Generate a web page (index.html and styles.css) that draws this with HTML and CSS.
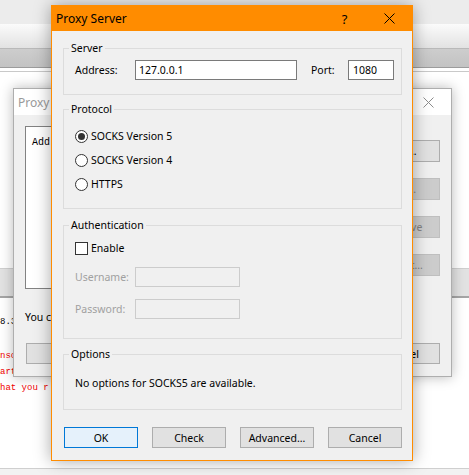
FILE: index.html
```html
<!DOCTYPE html>
<html>
<head>
<meta charset="utf-8">
<link rel="stylesheet" href="styles.css">
</head>
<body>
<div class="app">
  <div class="app-top"></div>
  <div class="app-fade"></div>
  <div class="app-band"></div>
  <div class="app-lines"></div>
  <div class="app-view"></div>
  <div class="app-bar2"></div>
  <div class="console">
    <div class="con-line con-dark">8.3</div>
    <div class="con-line con-red con-gap">nso</div>
    <div class="con-line con-red">art</div>
    <div class="con-line con-red">hat you r</div>
  </div>
  <div class="app-status"></div>
</div>

<div class="dlg2">
  <div class="dlg2-title">
    <span class="dlg2-caption">Proxy</span>
    <span class="dlg2-close"><svg width="11" height="11" viewBox="0 0 11 11"><path d="M0.5 0.5L10.5 10.5M10.5 0.5L0.5 10.5" stroke="#8c8c8c" stroke-width="1" fill="none"/></svg></span>
  </div>
  <div class="dlg2-body">
    <div class="dlg2-row">
      <div class="listbox"><span class="mono">Add</span></div>
      <div class="side-btns">
        <span class="btn2">Add...</span>
        <span class="btn2 disabled">Edit...</span>
        <span class="btn2 disabled">Remove</span>
        <span class="btn2 disabled">Export...</span>
      </div>
    </div>
    <div class="dlg2-text">You can</div>
    <div class="dlg2-btnrow">
      <span class="btn2">OK</span>
      <span class="btn2">Cancel</span>
    </div>
  </div>
</div>

<div class="dlg">
  <div class="titlebar">
    <span class="title">Proxy Server</span>
    <span class="cap-btn help">?</span>
    <span class="cap-btn"><svg width="11" height="11" viewBox="0 0 11 11"><path d="M0.5 0.5L10.5 10.5M10.5 0.5L0.5 10.5" stroke="#000" stroke-width="1" fill="none"/></svg></span>
  </div>
  <div class="dlg-body">
    <fieldset class="grp">
      <legend>Server</legend>
      <div class="gbody gb-server">
        <div class="row">
          <span class="lbl lbl-addr">Address:</span>
          <span class="input w-addr">127.0.0.1</span>
          <span class="lbl lbl-port">Port:</span>
          <span class="input w-port">1080</span>
        </div>
      </div>
    </fieldset>

    <fieldset class="grp grp-protocol">
      <legend>Protocol</legend>
      <div class="gbody gb-protocol">
        <div class="radio-row"><span class="radio checked"></span><span>SOCKS Version 5</span></div>
        <div class="radio-row"><span class="radio"></span><span>SOCKS Version 4</span></div>
        <div class="radio-row"><span class="radio"></span><span>HTTPS</span></div>
      </div>
    </fieldset>

    <fieldset class="grp grp-auth">
      <legend>Authentication</legend>
      <div class="gbody gb-auth">
        <div class="check-row"><span class="checkbox"></span><span>Enable</span></div>
        <div class="row row-user"><span class="lbl lbl-addr off">Username:</span><span class="input w-auth dis"></span></div>
        <div class="row row-pass"><span class="lbl lbl-addr off">Password:</span><span class="input w-auth dis"></span></div>
      </div>
    </fieldset>

    <fieldset class="grp grp-options">
      <legend>Options</legend>
      <div class="gbody gb-options">No options for SOCKS5 are available.</div>
    </fieldset>

    <div class="btnrow">
      <span class="btn default">OK</span>
      <span class="btn">Check</span>
      <span class="btn">Advanced...</span>
      <span class="btn">Cancel</span>
    </div>
  </div>
</div>
</body>
</html>
```

FILE: styles.css
```css
* { box-sizing: border-box; }
html, body { margin: 0; padding: 0; }
body {
  width: 469px;
  height: 475px;
  overflow: hidden;
  position: relative;
  background: #fff;
  font-family: "Noto Sans", "Liberation Sans", sans-serif;
  font-size: 10.5px;
  color: #000;
}

/* background application */
.app { display: flex; flex-direction: column; height: 475px; }
.app-top { height: 24px; background: #ececec; }
.app-fade { height: 24px; background: linear-gradient(#fbfbfb, #e2e2e2); }
.app-band { height: 19px; background: linear-gradient(#cdcdcd, #c3c3c3); border-top: 1px solid #b9b9b9; }
.app-lines { height: 5px; background: #fff; border-top: 1px solid #9c9c9c; border-bottom: 1px solid #c9c9c9; }
.app-view { height: 196px; background: #fff; }
.app-bar2 { height: 30px; background: #e2e2e2; border-top: 1px solid #cfcfcf; border-bottom: 2px solid #a5a5a5; }
.console { flex: 1; padding-top: 16px; font-family: "Liberation Mono", monospace; font-size: 9px; }
.con-line { height: 16px; line-height: 16px; white-space: nowrap; }
.con-dark { color: #000; }
.con-red { color: #f00000; }
.con-gap { margin-top: 18px; }
.app-status { height: 7px; background: #f2f2f2; border-top: 1px solid #cfcfcf; }

/* second dialog behind */
.dlg2 {
  position: absolute;
  left: 13px; top: 88px;
  width: 439px; height: 289px;
  border: 1px solid #aeaeae;
  background: #f0f0f0;
  box-shadow: 0 0 12px rgba(0,0,0,0.28);
  display: flex; flex-direction: column;
}
.dlg2-title { height: 26px; background: #fff; display: flex; align-items: center; padding-left: 4px; font-size: 12px; }
.dlg2-caption { flex: 1; color: #9a9a9a; }
.dlg2-close { width: 46px; display: flex; justify-content: center; }
.dlg2-body { padding: 11px 11px 0 11px; display: flex; flex-direction: column; }
.dlg2-row { display: flex; }
.listbox { width: 320px; height: 163px; background: #fff; border: 1px solid #828282; padding: 6px 0 0 6px; line-height: 16px; }
.mono { font-family: "Liberation Mono", monospace; font-size: 10px; }
.side-btns { margin-left: auto; margin-top: 14px; display: flex; flex-direction: column; gap: 16px; }
.btn2 {
  width: 75px; height: 22px;
  display: flex; align-items: center; justify-content: center;
  background: #e1e1e1; border: 1px solid #adadad;
}
.btn2.disabled { background: #cccccc; border-color: #bfbfbf; color: #838383; }
.dlg2-text { margin-top: 20px; line-height: 16px; height: 16px; white-space: nowrap; }
.dlg2-btnrow { margin-top: 18px; display: flex; justify-content: space-between; padding-left: 1px; }
.dlg2-btnrow .btn2 { height: 21px; }

/* main dialog */
.dlg {
  position: absolute;
  left: 51px; top: 5px;
  width: 362px;
  border: 1px solid #ff8c00;
  background: #f0f0f0;
  box-shadow: 0 0 16px rgba(0,0,0,0.35);
}
.titlebar { height: 25px; background: #ff8c00; display: flex; align-items: center; font-size: 12px; }
.title { flex: 1; padding-left: 4px; }
.cap-btn { width: 45px; height: 25px; display: flex; align-items: center; justify-content: center; }
.help { font-size: 13px; }

.dlg-body { padding: 9px 10px 12px 11px; display: flex; flex-direction: column; }
.grp { margin: 0; padding: 0; min-width: 0; border: 1px solid #dcdcdc; }
.grp legend { margin-left: 5px; padding: 0 2px; line-height: 16px; height: 16px; }
.grp-protocol { margin-top: 6px; }
.grp-auth { margin-top: 8px; }
.grp-options { margin-top: 7px; }
.gbody { padding-left: 11px; }
.gb-server { padding-top: 4px; padding-bottom: 14px; }
.gb-protocol { padding-top: 7px; padding-bottom: 12px; }
.gb-auth { padding-top: 5px; padding-bottom: 19px; }
.gb-options { padding-top: 13px; padding-bottom: 18px; line-height: 16px; height: 47px; }

.row { display: flex; align-items: center; height: 20px; }
.lbl { white-space: nowrap; }
.lbl-addr { width: 60px; }
.lbl-port { margin-left: 14px; width: 37px; }
.off { color: #a0a0a0; }
.input { height: 20px; background: #fff; border: 1px solid #7a7a7a; line-height: 18px; padding-left: 3px; white-space: nowrap; }
.w-addr { width: 162px; }
.w-port { width: 46px; padding-left: 4px; }
.w-auth { width: 105px; }
.input.dis { background: #f0f0f0; border-color: #cccccc; }
.row-user { margin-top: 9px; }
.row-pass { margin-top: 12px; }

.radio-row { display: flex; align-items: center; height: 24px; gap: 3px; }
.radio { width: 13px; height: 13px; border: 1px solid #333; border-radius: 50%; background: #fff; display: flex; align-items: center; justify-content: center; }
.radio.checked::after { content: ""; width: 7px; height: 7px; border-radius: 50%; background: #333; }
.check-row { display: flex; align-items: center; height: 20px; gap: 3px; }
.checkbox { width: 13px; height: 13px; border: 1px solid #333; background: #fff; }

.btnrow { margin-top: 17px; display: flex; justify-content: space-between; padding-left: 1px; }
.btn {
  width: 74px; height: 21px;
  display: flex; align-items: center; justify-content: center;
  background: #e1e1e1; border: 1px solid #adadad;
  white-space: nowrap;
}
.btn.default { background: #e5f1fb; border-color: #0078d7; }
```
